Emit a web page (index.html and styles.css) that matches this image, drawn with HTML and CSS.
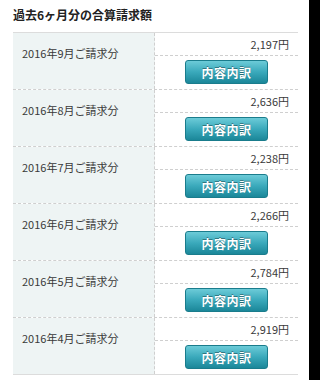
FILE: index.html
```html
<!DOCTYPE html>
<html lang="ja">
<head>
<meta charset="utf-8">
<link rel="stylesheet" href="styles.css">
</head>
<body>
<div class="page">
  <h1 class="title">過去6ヶ月分の合算請求額</h1>
  <div class="table">
    <div class="row">
      <div class="month">2016年9月ご請求分</div>
      <div class="detail"><div class="amount">2,197円</div><div class="action"><span class="btn">内容内訳</span></div></div>
    </div>
    <div class="row">
      <div class="month">2016年8月ご請求分</div>
      <div class="detail"><div class="amount">2,636円</div><div class="action"><span class="btn">内容内訳</span></div></div>
    </div>
    <div class="row">
      <div class="month">2016年7月ご請求分</div>
      <div class="detail"><div class="amount">2,238円</div><div class="action"><span class="btn">内容内訳</span></div></div>
    </div>
    <div class="row">
      <div class="month">2016年6月ご請求分</div>
      <div class="detail"><div class="amount">2,266円</div><div class="action"><span class="btn">内容内訳</span></div></div>
    </div>
    <div class="row">
      <div class="month">2016年5月ご請求分</div>
      <div class="detail"><div class="amount">2,784円</div><div class="action"><span class="btn">内容内訳</span></div></div>
    </div>
    <div class="row last">
      <div class="month">2016年4月ご請求分</div>
      <div class="detail"><div class="amount">2,919円</div><div class="action"><span class="btn">内容内訳</span></div></div>
    </div>
  </div>
</div>
</body>
</html>
```
FILE: styles.css
```css
html, body {
  margin: 0;
  padding: 0;
  background: #000;
  height: 100%;
}
body {
  font-family: "Noto Sans CJK JP", "Noto Sans", sans-serif;
  color: #3a3a3a;
}
.page {
  width: 309px;
  min-height: 380px;
  background: #fff;
  padding: 6px 11px 0 13px;
  box-sizing: border-box;
}
.title {
  margin: 0;
  font-size: 12px;
  font-weight: bold;
  line-height: 18px;
  color: #222;
  height: 26px;
}
.table {
  border-top: 1px solid #dcdcdc;
  width: 285px;
}
.row {
  display: grid;
  grid-template-columns: 142px 1fr;
  border-bottom: 1px dashed #cfcfcf;
  height: 57px;
  box-sizing: border-box;
}
.row.last {
  border-bottom: 1px solid #dcdcdc;
}
.month {
  background: #eef4f4;
  border-right: 1px dashed #cfcfcf;
  font-size: 11px;
  line-height: 16px;
  padding: 12px 0 0 9px;
}
.detail {
  display: flex;
  flex-direction: column;
}
.amount {
  height: 23px;
  border-bottom: 1px dashed #cfcfcf;
  font-size: 11px;
  text-align: right;
  padding-right: 9px;
  line-height: 22px;
  box-sizing: border-box;
}
.action {
  padding: 4px 0 0 30px;
}
.btn {
  display: flex;
  align-items: center;
  justify-content: center;
  width: 83px;
  height: 24px;
  box-sizing: border-box;
  border-radius: 3px;
  border: 1px solid #1a7c8c;
  background: linear-gradient(#6ccbd8, #3aa9bb 50%, #1b8799);
  color: #fff;
  font-weight: bold;
  font-size: 12px;
  letter-spacing: 0.5px;
  text-shadow: 0 -1px 0 rgba(0,0,0,0.35);
}
```
